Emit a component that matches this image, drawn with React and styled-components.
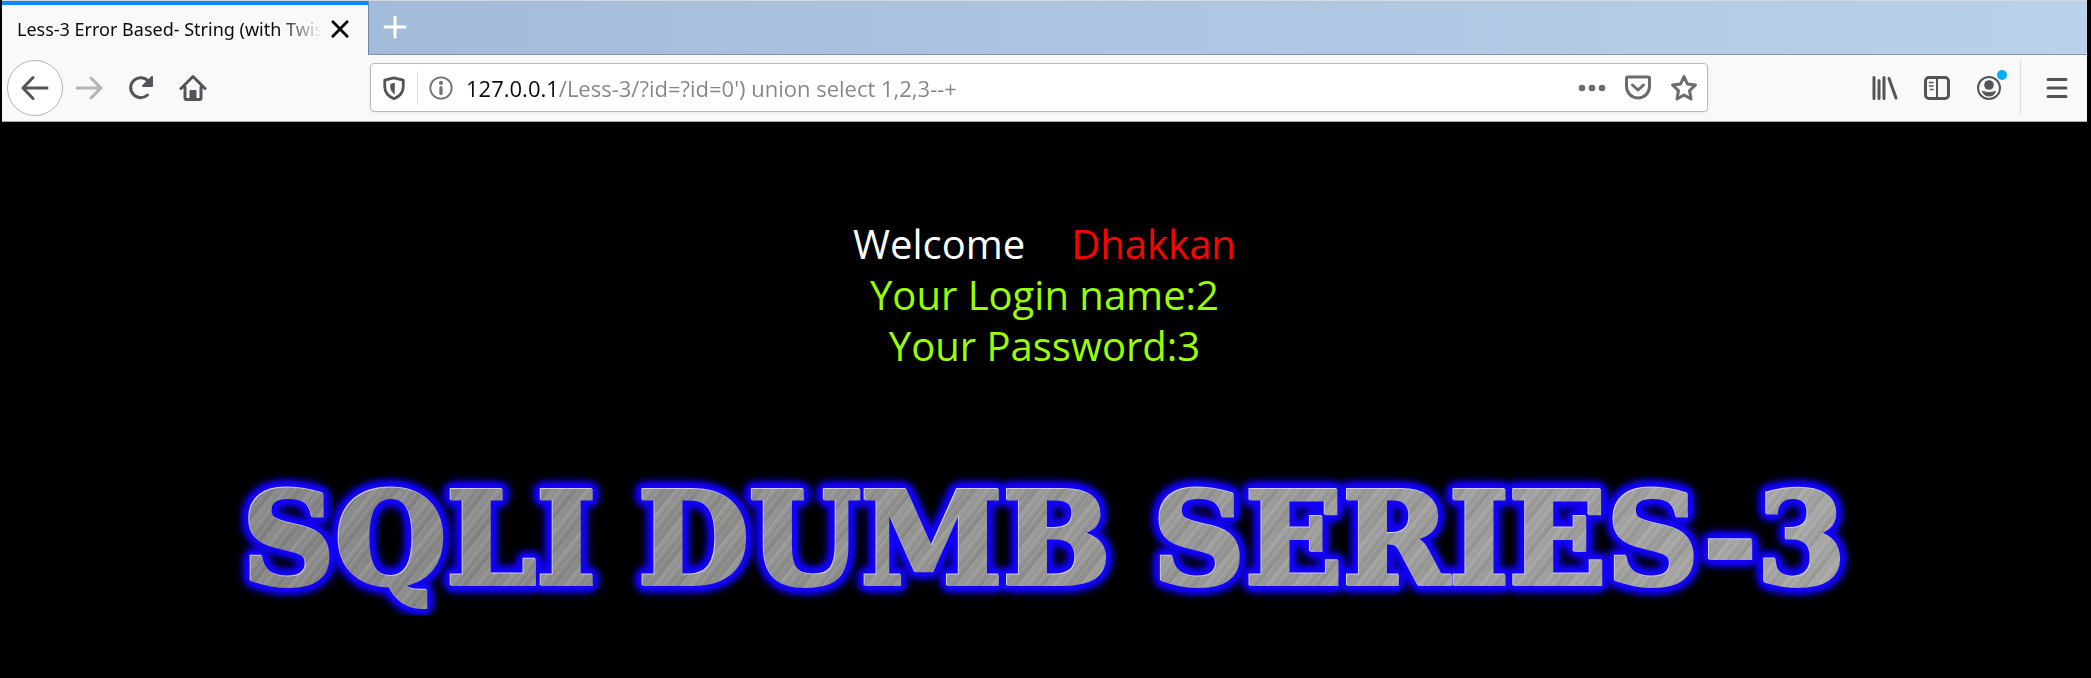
import React from "react";
import styled, { createGlobalStyle } from "styled-components";

const Global = createGlobalStyle`
  * { box-sizing: border-box; }
  html, body { margin: 0; background: #000; }
  button, input { font: inherit; border: 0; padding: 0; background: none; color: inherit; }
  body { font-family: "Open Sans", "Noto Sans", sans-serif; }
`;

const Browser = styled.div`
  padding: 0 4px 0 2px;
  background: #000;
`;

const TabStrip = styled.div`
  display: flex;
  height: 55px;
  border-top: 1px solid #d8d8d8;
  background: linear-gradient(90deg, #9db7d5, #b9d1ea);
`;

const Tab = styled.div`
  display: flex;
  align-items: center;
  gap: 8px;
  width: 366px;
  padding: 0 18px 2px 15px;
  border-top: 4px solid #0a84ff;
  background: #f9f9fa;
`;

const TabTitle = styled.span`
  flex: 1;
  overflow: hidden;
  white-space: nowrap;
  font-family: "Noto Sans", sans-serif;
  font-size: 18px;
  line-height: 48px;
  color: #0c0c0d;
  mask-image: linear-gradient(90deg, #000 86%, transparent 100%);
`;

const IconButton = styled.button`
  display: grid;
  place-items: center;
  flex: none;
  width: ${(p) => p.$w || 52}px;
  height: ${(p) => p.$h || 56}px;
  color: ${(p) => p.$color || "#545456"};
`;

const StripRest = styled.div`
  flex: 1;
  padding-left: 2px;
  border-left: 1px solid #6f87a4;
  border-bottom: 1px solid #7f97b4;
`;

const Toolbar = styled.div`
  display: flex;
  align-items: center;
  height: 67px;
  padding-bottom: 1px;
  background: #f9f9fa;
  border-bottom: 1px solid #a8a8a8;
`;

const NavGroup = styled.div`
  display: flex;
  align-items: center;
  width: 368px;
  padding-left: 5px;
`;

const BackButton = styled(IconButton)`
  border: 1px solid #b4b4b6;
  border-radius: 50%;
  background: #fff;
`;

const AddressBar = styled.form`
  display: flex;
  align-items: center;
  flex: 0 1 1338px;
  height: 49px;
  border: 1px solid #b9b9bb;
  border-radius: 4px;
  background: #fff;
  box-shadow: 0 1px 4px rgba(0, 0, 0, 0.06);
`;

const Divider = styled.span`
  flex: none;
  width: 1px;
  height: ${(p) => p.$h}px;
  margin-left: ${(p) => p.$gap || 0}px;
  background: #dcdcde;
`;

const Address = styled.input`
  flex: 1;
  min-width: 0;
  height: 46px;
  margin-left: 2px;
  font-size: 22px;
  color: transparent;
  background: linear-gradient(90deg, #0c0c0d 91px, #858587 91px);
  background-clip: text;
  -webkit-background-clip: text;
  outline: 0;
`;

const Tools = styled.div`
  display: flex;
  align-items: center;
  margin-left: auto;
`;

const MenuButton = styled(IconButton)`
  padding-left: 6px;
`;

const Page = styled.main`
  display: flex;
  flex-direction: column;
  align-items: center;
  padding-top: 96px;
`;

const Message = styled.p`
  margin: 0;
  text-align: center;
  font-size: 40px;
  line-height: 51px;
  color: #99ff00;
`;

const Welcome = styled.span`
  color: #fff;
  margin-right: 46px;
`;

const Name = styled.span`
  color: #ff0000;
`;

const Banner = styled.h1`
  display: flex;
  gap: 42px;
  margin: 92px 0 0;
  font-family: "DejaVu Serif", serif;
  font-weight: 700;
  font-size: 128px;
  line-height: 152px;
  white-space: nowrap;
  color: transparent;
  -webkit-text-stroke: 4px transparent;
  background:
    repeating-linear-gradient(128deg, rgba(255,255,255,0.08) 0 1px, transparent 2px 4px, rgba(0,0,0,0.05) 5px, transparent 7px),
    repeating-linear-gradient(131deg, rgba(255,255,255,0.06) 0 3px, transparent 9px, rgba(0,0,0,0.05) 17px, rgba(255,255,255,0.04) 23px),
    linear-gradient(90deg, #888888, #979795 50%, #a6a6a4);
  background-clip: text;
  -webkit-background-clip: text;
  filter: drop-shadow(-1px -1px 0 #d0d0e4) drop-shadow(0 0 2px #1400ff) drop-shadow(0 0 2px #1400ff) drop-shadow(0 0 3px #1400ff) drop-shadow(0 0 3px #1400ff) drop-shadow(0 0 3px #1400ff);
`;

function Icon({ size = 28, width = 3, children }) {
  return (
    <svg width={size} height={size} viewBox="0 0 28 28" fill="none" stroke="currentColor" strokeWidth={width} strokeLinecap="round" strokeLinejoin="round" aria-hidden="true">
      {children}
    </svg>
  );
}

const AccountBadge = styled.span`
  position: absolute;
  top: 10px;
  right: 8px;
  width: 10px;
  height: 10px;
  border-radius: 50%;
  background: #00b0ff;
`;

const AccountButton = styled(IconButton)`
  position: relative;
`;

export default function App() {
  return (
    <Browser>
      <Global />
      <TabStrip>
        <Tab>
          <TabTitle>Less-3 Error Based- String (with Twis</TabTitle>
          <IconButton $w={20} $h={20} $color="#0c0c0d" aria-label="Close tab">
            <Icon size={20} width={4}><path d="M4 4 L24 24 M24 4 L4 24" /></Icon>
          </IconButton>
        </Tab>
        <StripRest>
          <IconButton $w={48} $h={52} $color="#fff" aria-label="New tab">
            <Icon width={3}><path d="M14 4V24M4 14H24" /></Icon>
          </IconButton>
        </StripRest>
      </TabStrip>
      <Toolbar>
        <NavGroup>
          <BackButton $w={56} aria-label="Back">
            <Icon><path d="M26 14H2M12 3.500L2 14L12 24.500" /></Icon>
          </BackButton>
          <IconButton $color="#b5b5b6" aria-label="Forward">
            <Icon><path d="M2 14H26M16 4L26 14L16 24" /></Icon>
          </IconButton>
          <IconButton aria-label="Reload">
            <Icon><path d="M20.500 21A10 10 0 1 1 21.500 7.500" /><path d="M25 3V12H16Z" fill="currentColor" strokeWidth="2" /></Icon>
          </IconButton>
          <IconButton aria-label="Home">
            <Icon>
              <path d="M2 14.500L14 2.500L26 14.500M6 13V24Q6 25.500 7.500 25.500H20.500Q22 25.500 22 24V13" />
              <path d="M11.500 25V17H16.500V25Z" fill="currentColor" strokeWidth="2" />
            </Icon>
          </IconButton>
        </NavGroup>
        <AddressBar onSubmit={(e) => e.preventDefault()}>
          <IconButton type="button" $w={46} $h={46} aria-label="Tracking protection">
            <Icon size={26}><path d="M14 3L24 5.500V12C24 18.500 20 23 14 25.500C8 23 4 18.500 4 12V5.500Z" /><path d="M14 9L10.500 10V13C10.500 16 12 18.500 14 20Z" fill="currentColor" strokeWidth="1" /></Icon>
          </IconButton>
          <Divider $h={34} />
          <IconButton type="button" $w={46} $h={46} $color="#737375" aria-label="Site information">
            <Icon size={26} width={2}><circle cx="14" cy="14" r="11.500" /><path d="M14 13.500V20" strokeWidth="3.500" /><circle cx="14" cy="8.500" r="2.200" fill="currentColor" stroke="none" /></Icon>
          </IconButton>
          <Address aria-label="Address" defaultValue="127.0.0.1/Less-3/?id=?id=0') union select 1,2,3--+" />
          <IconButton type="button" $w={46} $h={46} $color="#6b6b6d" aria-label="Page actions">
            <Icon><g fill="currentColor" stroke="none"><circle cx="4" cy="14" r="3.300" /><circle cx="14" cy="14" r="3.300" /><circle cx="24" cy="14" r="3.300" /></g></Icon>
          </IconButton>
          <IconButton type="button" $w={46} $h={46} $color="#6b6b6d" aria-label="Save to Pocket">
            <Icon><path d="M4 3H24Q25.500 3 25.500 4.500V12.500A11.500 11.500 0 0 1 2.500 12.500V4.500Q2.500 3 4 3Z" /><path d="M8.500 11L14 16L19.500 11" /></Icon>
          </IconButton>
          <IconButton type="button" $w={46} $h={46} $color="#6b6b6d" aria-label="Bookmark">
            <Icon><path d="M14 2.500L17.400 10L25.500 11L19.500 16.600L21 25L14 21L7 25L8.500 16.600L2.500 11L10.600 10Z" /></Icon>
          </IconButton>
        </AddressBar>
        <Tools>
          <IconButton aria-label="Library">
            <Icon><path d="M3 3.500V24.500M8 6.500V24.500M13 3.500V24.500M18 4.500L25 24" /></Icon>
          </IconButton>
          <IconButton aria-label="Sidebars">
            <Icon><rect x="2.500" y="3.500" width="23" height="21" rx="3.500" /><path d="M14 4V24" strokeWidth="2" /><path d="M6.500 8.500H10M6.500 12H10M7.500 15.500H10" strokeWidth="1.500" /></Icon>
          </IconButton>
          <AccountButton aria-label="Account">
            <Icon width={2}><circle cx="14" cy="14" r="11" /><circle cx="14" cy="11" r="4.800" fill="currentColor" stroke="none" /><path d="M7.500 17.500Q14 20 20.500 17.500Q19 22 14 22Q9 22 7.500 17.500Z" fill="currentColor" strokeWidth="1" /></Icon>
            <AccountBadge />
          </AccountButton>
          <Divider $h={55} $gap={5} />
          <MenuButton $w={66} aria-label="Menu">
            <Icon><path d="M5 5.500H23M5 14H23M5 22.500H23" /></Icon>
          </MenuButton>
        </Tools>
      </Toolbar>
      <Page>
        <Message><Welcome>Welcome</Welcome><Name>Dhakkan</Name></Message>
        <Message>Your Login name:2</Message>
        <Message>Your Password:3</Message>
        <Banner><span>SQLI</span> <span>DUMB</span> <span>SERIES-3</span></Banner>
      </Page>
    </Browser>
  );
}
